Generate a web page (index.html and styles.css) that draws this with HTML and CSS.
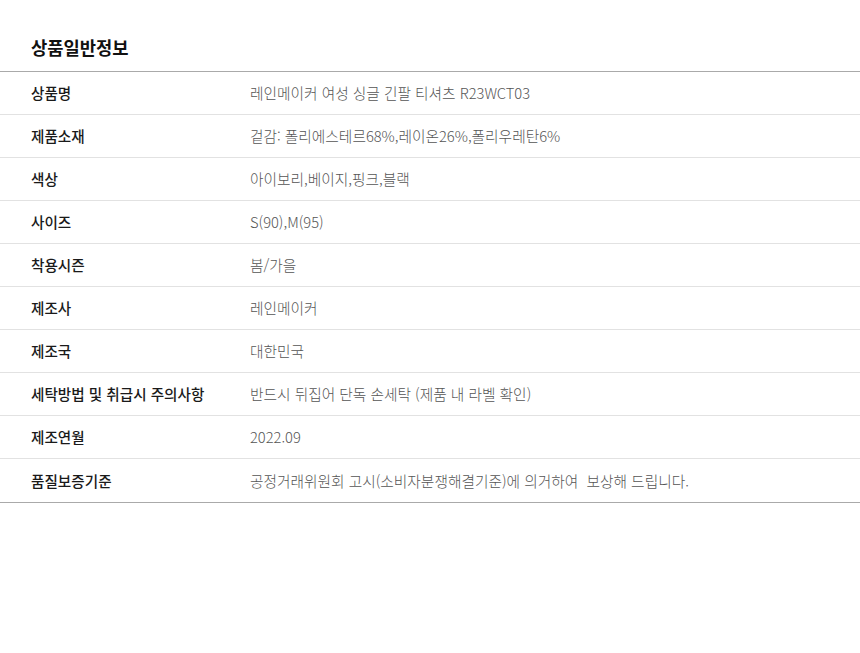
FILE: index.html
```html
<!DOCTYPE html>
<html lang="ko">
<head>
<meta charset="utf-8">
<link rel="stylesheet" href="styles.css">
</head>
<body>
<section class="info">
  <h2 class="info-title">상품일반정보</h2>
  <table class="info-table">
    <tbody>
      <tr><th>상품명</th><td>레인메이커 여성 싱글 긴팔 티셔츠 R23WCT03</td></tr>
      <tr><th>제품소재</th><td>겉감: 폴리에스테르68%,레이온26%,폴리우레탄6%</td></tr>
      <tr><th>색상</th><td>아이보리,베이지,핑크,블랙</td></tr>
      <tr><th>사이즈</th><td>S(90),M(95)</td></tr>
      <tr><th>착용시즌</th><td>봄/가을</td></tr>
      <tr><th>제조사</th><td>레인메이커</td></tr>
      <tr><th>제조국</th><td>대한민국</td></tr>
      <tr><th>세탁방법 및 취급시 주의사항</th><td>반드시 뒤집어 단독 손세탁 (제품 내 라벨 확인)</td></tr>
      <tr><th>제조연월</th><td>2022.09</td></tr>
      <tr><th>품질보증기준</th><td>공정거래위원회 고시(소비자분쟁해결기준)에 의거하여&nbsp; 보상해 드립니다.</td></tr>
    </tbody>
  </table>
</section>
</body>
</html>
```
FILE: styles.css
```css
html, body {
  margin: 0;
  padding: 0;
  background: #fff;
}
body {
  font-family: "Noto Sans CJK KR", "Noto Sans", sans-serif;
  color: #222;
}
.info {
  width: 860px;
}
.info-title {
  margin: 0;
  padding: 34px 0 11px 31px;
  font-size: 17.7px;
  font-weight: 700;
  line-height: 26px;
  color: #111;
}
.info-table {
  width: 100%;
  border-collapse: collapse;
  border-top: 1px solid #aaa;
  border-bottom: 1px solid #aaa;
}
.info-table tr {
  border-bottom: 1px solid #e2e2e2;
}
.info-table tr:last-child {
  border-bottom: none;
}
.info-table tr:last-child th,
.info-table tr:last-child td {
  height: 43px;
}
.info-table th,
.info-table td {
  height: 42px;
  padding: 0;
  font-size: 14.6px;
  text-align: left;
  vertical-align: middle;
  line-height: 20px;
}
.info-table th {
  width: 219px;
  padding-left: 31px;
  font-weight: 500;
  color: #1a1a1a;
}
.info-table td {
  font-size: 14.7px;
  font-weight: 300;
  color: #555;
}
```
